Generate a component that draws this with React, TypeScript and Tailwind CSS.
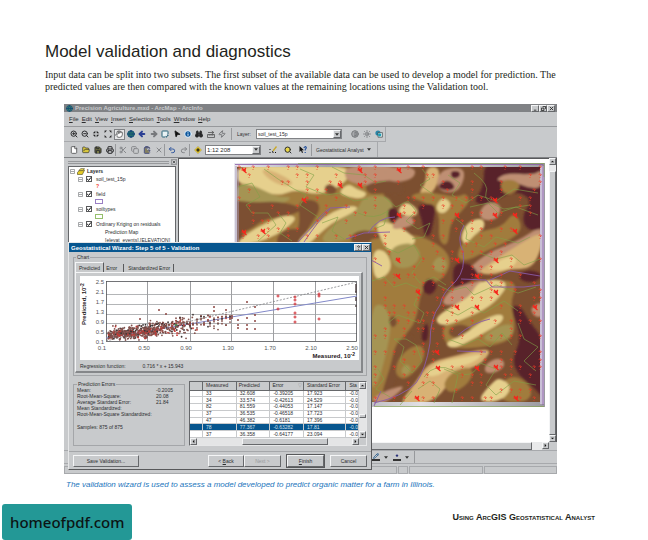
import React from "react";
import {
  ZoomIn, ZoomOut, Hand, Globe, ArrowLeft, ArrowRight, Info, Binoculars, Zap,
  File, FolderOpen, Save, Printer, Scissors, Copy, ClipboardPaste, X, Undo2, Redo2,
  Contrast, Sun, MousePointer2, SquareMousePointer, Pencil, Search, Pin,
} from "lucide-react";

type Pt = [number, number];

const raised = "border border-t-[#f4f5f6] border-l-[#f4f5f6] border-r-[#66686b] border-b-[#66686b] bg-[#c8cacc]";

/* ---------- deterministic random numbers ---------- */
function makeRandom(seed: number) {
  let s = seed;
  return () => {
    s = (s * 16807) % 2147483647;
    return s / 2147483647;
  };
}

/* Closed curve through the midpoints of the given corners. */
function smooth(points: Pt[]) {
  const mid = (a: Pt, b: Pt) => `${(a[0] + b[0]) / 2} ${(a[1] + b[1]) / 2}`;
  const last = points[points.length - 1];
  let d = `M${mid(last, points[0])}`;
  points.forEach((p, i) => {
    d += `Q${p[0]} ${p[1]} ${mid(p, points[(i + 1) % points.length])}`;
  });
  return d + "Z";
}

const OCHRE = "#a17b3d";
const OLIVE = "#a59453";
const CREAM = "#e6d08d";
const TAN = "#d8b274";
const PINK = "#bf8f73";
const BROWN = "#7c4f30";
const MAROON = "#59242b";

const regions: [string, Pt[]][] = [
  [OCHRE, [[0, 0], [125, 0], [150, 30], [165, 60], [150, 90], [0, 90]]],
  [CREAM, [[2, 2], [55, 3], [114, 3], [116, 14], [102, 26], [82, 32], [62, 26], [42, 34], [18, 22], [2, 20]]],
  [OLIVE, [[2, 20], [20, 22], [42, 34], [60, 34], [46, 42], [20, 38], [2, 42]]],
  [TAN, [[26, 6], [40, 8], [62, 20], [50, 24], [34, 16]]],
  [BROWN, [[-8, 36], [20, 40], [40, 38], [62, 42], [68, 48], [50, 54], [30, 56], [18, 66], [-8, 76]]],
  [BROWN, [[64, 42], [70, 36], [84, 38], [86, 48], [76, 62], [68, 78], [60, 80], [66, 60]]],
  [CREAM, [[2, 80], [14, 70], [28, 62], [50, 52], [64, 54], [52, 66], [34, 76], [12, 82]]],
  [BROWN, [[44, 70], [62, 64], [70, 72], [62, 84], [42, 84]]],
  [CREAM, [[60, 82], [82, 60], [100, 48], [118, 42], [126, 46], [110, 54], [98, 60], [84, 72], [74, 82]]],
  [OLIVE, [[84, 80], [98, 62], [125, 46], [128, 34], [150, 32], [160, 40], [158, 60], [135, 68], [112, 78]]],
  [CREAM, [[104, 30], [114, 20], [122, 26], [134, 30], [128, 36], [114, 34]]],
  [PINK, [[112, 2], [165, 2], [165, 18], [140, 22], [125, 22], [110, 16]]],
  [BROWN, [[130, 20], [170, 16], [170, 32], [150, 30], [134, 32]]],
  [BROWN, [[90, 24], [96, 20], [104, 26], [100, 32], [92, 30]]],
  [BROWN, [[116, 72], [130, 66], [150, 72], [140, 82], [118, 82]]],
  [OCHRE, [[128, 78], [150, 74], [180, 70], [210, 84], [218, 100], [208, 118], [188, 122], [182, 160], [170, 172], [160, 202], [150, 234], [128, 242]]],
  [CREAM, [[140, 58], [158, 60], [176, 70], [184, 80], [160, 90], [150, 84]]],
  [CREAM, [[138, 88], [150, 86], [158, 100], [154, 112], [140, 118]]],
  [OLIVE, [[154, 86], [176, 78], [188, 90], [180, 104], [160, 106]]],
  [OLIVE, [[136, 144], [150, 140], [158, 160], [152, 192], [144, 220], [136, 228]]],
  [OLIVE, [[198, 100], [206, 92], [214, 100], [210, 110], [200, 108]]],
  [PINK, [[151, 4], [182, 4], [180, 16], [160, 20], [151, 14]]],
  [TAN, [[192, 4], [206, 4], [204, 22], [194, 34], [184, 30], [192, 20]]],
  [PINK, [[206, 8], [222, 4], [232, 8], [226, 28], [210, 30], [202, 22]]],
  [MAROON, [[216, 8], [226, 8], [226, 14], [218, 16]]],
  [MAROON, [[204, 22], [214, 16], [222, 24], [216, 28], [206, 26]]],
  [OCHRE, [[174, 34], [188, 28], [212, 32], [224, 34], [232, 30], [236, 38], [228, 48], [216, 60], [214, 84], [204, 78], [206, 48], [188, 38]]],
  [MAROON, [[182, 42], [202, 40], [200, 56], [196, 74], [190, 72], [188, 56]]],
  [MAROON, [[154, 46], [161, 44], [166, 54], [160, 62], [154, 56]]],
  [CREAM, [[164, 46], [172, 38], [184, 46], [182, 54], [166, 52]]],
  [PINK, [[164, 54], [176, 52], [182, 60], [170, 66], [156, 66]]],
  [CREAM, [[202, 42], [209, 34], [218, 40], [212, 50], [204, 50]]],
  [MAROON, [[250, -4], [320, -8], [314, 66], [292, 68], [288, 52], [298, 38], [285, 28], [266, 34], [256, 42], [238, 40], [250, 24]]],
  [PINK, [[260, 18], [272, 10], [300, 12], [308, 6], [308, 26], [292, 24], [278, 18]]],
  [OCHRE, [[266, 18], [278, 16], [288, 22], [278, 32], [268, 30]]],
  [PINK, [[244, 50], [254, 38], [268, 42], [264, 56], [250, 58]]],
  [OCHRE, [[222, 96], [228, 78], [246, 68], [268, 64], [280, 48], [290, 66], [272, 80], [252, 88], [234, 98]]],
  [CREAM, [[226, 76], [232, 60], [248, 54], [252, 64], [240, 72], [232, 82]]],
  [PINK, [[228, 112], [252, 90], [284, 78], [308, 62], [310, 80], [298, 92], [262, 106], [240, 112]]],
  [TAN, [[242, 110], [262, 96], [284, 82], [308, 68], [308, 84], [298, 106], [276, 106], [260, 112]]],
  [CREAM, [[250, 106], [268, 96], [280, 92], [284, 100], [270, 108]]],
  [MAROON, [[219, 100], [236, 100], [246, 112], [238, 116], [224, 128], [219, 124]]],
  [MAROON, [[188, 122], [196, 114], [204, 122], [198, 132], [190, 130]]],
  [MAROON, [[284, 112], [296, 106], [310, 112], [300, 120], [288, 118]]],
  [PINK, [[206, 142], [216, 126], [236, 120], [252, 116], [240, 132], [224, 142]]],
  [OCHRE, [[208, 160], [250, 136], [264, 116], [284, 120], [276, 140], [282, 164], [276, 178], [252, 184], [222, 186], [210, 180]]],
  [CREAM, [[200, 156], [216, 144], [236, 134], [244, 118], [268, 116], [274, 124], [256, 144], [230, 156], [208, 164]]],
  [BROWN, [[214, 166], [226, 160], [240, 166], [230, 176], [216, 174]]],
  [CREAM, [[210, 180], [230, 172], [250, 156], [268, 150], [270, 158], [250, 170], [232, 180], [218, 186]]],
  [OLIVE, [[246, 176], [262, 164], [278, 160], [280, 172], [264, 180]]],
  [MAROON, [[276, 144], [286, 142], [296, 160], [310, 176], [312, 240], [302, 226], [284, 212], [278, 196], [288, 174]]],
  [PINK, [[296, 144], [310, 138], [310, 154], [300, 154]]],
  [MAROON, [[186, 176], [192, 158], [195, 166], [193, 180]]],
  [BROWN, [[154, 156], [160, 152], [164, 160], [158, 166]]],
  [BROWN, [[162, 178], [178, 170], [180, 180], [164, 200], [160, 226], [146, 234], [156, 206]]],
  [OCHRE, [[160, 210], [166, 192], [184, 180], [192, 188], [186, 204], [170, 218]]],
  [OLIVE, [[166, 208], [172, 200], [178, 206], [172, 214]]],
  [PINK, [[136, 236], [156, 226], [172, 222], [160, 234], [146, 242]]],
  [TAN, [[164, 242], [180, 222], [194, 200], [216, 194], [248, 186], [258, 188], [244, 204], [220, 208], [208, 232], [188, 242]]],
  [CREAM, [[190, 212], [206, 198], [232, 194], [250, 190], [240, 200], [214, 206], [202, 214]]],
  [OCHRE, [[208, 220], [222, 206], [240, 204], [236, 220], [216, 232]]],
  [PINK, [[252, 200], [266, 194], [272, 202], [262, 210], [250, 210]]],
  [OCHRE, [[268, 218], [282, 212], [298, 224], [296, 238], [272, 240], [262, 230]]],
  [CREAM, [[244, 236], [258, 220], [266, 214], [278, 224], [270, 236], [254, 240]]],
];

const streams = [
  "M64 79L78 64Q88 50 96 45L116 44M70 79Q84 58 96 46",
  "M112 76L130 70L156 69M134 70Q144 54 161 54",
  "M137 97L148 103M230 62Q222 76 229 88Q232 106 222 118Q208 130 206 142Q196 154 196 180Q192 206 182 220Q168 234 140 240",
  "M227 116L252 117L258 124L290 124L306 122M256 117L276 108L306 113",
  "M224 172Q238 160 256 156M223 188L252 189M147 228L140 243",
];

const contours = [
  "M4 24L18 20L26 34L12 42L18 50L34 50L42 62L24 78M30 6L44 16L60 26L72 32L66 42L84 54L76 66",
  "M66 6L80 12L72 24L92 32L106 30L120 38L134 36M98 4L110 10L130 12L142 20L152 18",
  "M88 60L104 54L98 68L110 76M124 50Q140 58 154 48L150 62L140 66M44 50L52 60L46 70L58 78",
  "M150 34L162 44L174 38L182 48L172 58L184 66L196 60L190 74L178 76M188 6L196 16L186 22L200 32",
  "M214 12L226 20L218 32L232 40L244 32L262 38L280 26L304 30M240 10Q256 22 252 30T270 46L296 42",
  "M236 44L254 40L264 50L282 44L304 52M222 56Q236 64 232 76L250 84L262 74L284 80L296 74",
  "M150 84L164 90L180 82L188 96L178 110L186 120L200 114L212 122M246 90L262 96L278 92L290 102L306 96",
  "M138 118L150 114L160 124L172 120L186 126L180 142L190 150L186 160L164 152L154 160",
  "M204 122L216 128L232 124L240 132L262 122L284 130L302 124M210 146L224 152L238 144L250 150L270 138L284 148",
  "M160 176L170 184L166 198L178 210L188 198L182 182L172 176ZM214 176L230 182L244 176L256 184L268 170L278 182",
  "M190 214Q202 198 220 208T246 200L262 206L252 222L262 232L280 218L302 222M284 160L290 176L304 184L290 198L302 208",
  "M210 206L224 212L218 240M184 226L196 218L206 226L200 240M144 206L150 216L142 226L156 234M166 242L178 228",
];

const clusters: Pt[] = [
  [10, 7], [126, 7], [106, 22], [126, 22], [70, 37], [10, 69], [29, 68], [165, 7], [261, 37], [261, 52], [281, 52],
  [165, 52], [223, 52], [281, 68], [223, 97], [262, 97], [164, 97], [164, 113], [243, 113], [184, 129], [262, 129],
  [223, 144], [243, 144], [301, 144], [203, 189], [204, 205], [243, 205], [262, 204], [183, 235], [282, 235],
];

const samples: Pt[] = (() => {
  const rnd = makeRandom(4217);
  const out: Pt[] = [];
  for (let r = 0; r < 31; r++)
    for (let c = 0; c < 32; c++) {
      const keep = rnd() < 0.42;
      const x = Math.round(5 + c * 9.7 + (rnd() < 0.2 ? 4 : 0));
      const y = Math.round(4 + r * 7.7);
      if (keep && x < 307 && y < 239) out.push([x, y]);
    }
  return out;
})();

function FieldMap() {
  return (
    <svg viewBox="0 0 311 244" className="block h-[244px] w-[311px] shrink-0" role="img" aria-label="Organic matter prediction map">
      <defs>
        <filter id="relief" x="0" y="0" width="1" height="1"><feGaussianBlur stdDeviation="1.3" /></filter>
        <linearGradient id="edge" x1="0" x2="1">
          <stop offset="0" stopColor="#e9e8ef" /><stop offset=".3" stopColor="#a3a3a8" />
          <stop offset=".6" stopColor="#e1e0e4" /><stop offset="1" stopColor="#9b9aa0" />
        </linearGradient>
      </defs>
      <rect width="311" height="244" fill="url(#edge)" />
      <svg x="3" y="4" width="303" height="235" viewBox="3 4 303 235">
        <rect width="311" height="244" fill={BROWN} />
        <g filter="url(#relief)">
          {regions.map(([fill, pts], i) => <path key={i} d={smooth(pts)} fill={fill} />)}
        </g>
      </svg>
      <path d="M308 3V241" stroke="#c9bfd6" strokeWidth="4" />
      <path d="M2 244V3M4 240V6" stroke="#a99bb5" strokeWidth="1" />
      <g fill="none" stroke="#7fa146" strokeWidth=".6">
        {contours.map((d, i) => <path key={i} d={d} />)}
        <path d="M64 .5H310V14M140 243.5H310" />
      </g>
      <g fill="none" stroke="#8a5ba6" strokeWidth=".9">
        {streams.map((d, i) => <path key={i} d={d} />)}
        <path d="M1 1.5H309V242" strokeWidth=".8" />
      </g>
      <g stroke="#ee3a26" strokeWidth=".8" fill="none">
        {samples.map(([x, y], i) => <path key={i} d={`M${x - 1.3} ${y - 0.5}q1.3-1.3 2.6 0q0 1-1.3 1.3M${x} ${y + 2}v.8`} />)}
      </g>
      <g stroke="#f5261c" strokeWidth="1.1">
        {clusters.map(([x, y], i) => <path key={i} d={`M${x - 2} ${y - 2}l3.5 3.5M${x + 2} ${y - 2}l-3 3M${x - 2.5} ${y}h4.5M${x} ${y + 1}l2.5 2`} />)}
      </g>
    </svg>
  );
}

/* ---------- scatter chart ---------- */
const scatter: Pt[] = (() => {
  const rnd = makeRandom(977);
  const bell = () => rnd() + rnd() + rnd() - 1.5;
  const out: Pt[] = [];
  for (let i = 0; i < 600; i++) {
    const x = 28 + Math.pow(rnd(), 0.9) * 78 * (0.45 + rnd() * 0.75);
    const y = 60 - (x - 26) * 0.13 + bell() * (4 + (x - 26) * 0.06) - (rnd() < 0.05 ? 9 * rnd() : 0);
    out.push([x, Math.min(y, 64)]);
  }
  [92, 96, 100, 104, 107, 110, 113, 117, 121, 124, 128, 130, 134, 138, 142, 146, 150].forEach((x) => {
    for (let k = 0; k < 6; k++) out.push([x, 49 - (x - 90) * 0.1 + bell() * 8]);
  });
  return out;
})();

const outliers: Pt[] = [
  [134, 31], [134, 35], [146, 34], [167, 26], [175, 31], [152, 40], [152, 42], [158, 44], [158, 49], [158, 52],
  [167, 42], [167, 49], [167, 53], [175, 39], [175, 45], [175, 53], [79, 34], [60, 43], [86, 38],
];
const redPoints: Pt[] = [[198, 20], [198, 33], [215, 21], [215, 24], [215, 28], [215, 37], [215, 41], [215, 46], [239, 18], [239, 20], [239, 43]];
const edgePoints: Pt[] = [[276, 9], [276, 11], [276, 13], [276, 15], [276, 16], [276, 22], [276, 24], [276, 30]];

function Chart() {
  return (
    <svg viewBox="0 0 279 84" className="block h-[84px] w-full bg-white font-['Liberation_Sans',sans-serif]" role="img" aria-label="Predicted against measured values">
      <g stroke="#85878a" strokeWidth=".8" fill="none">
        <path d="M67.5 5V65M110.5 5V65M151.5 5V65M193.5 5V65M235.5 5V65" />
        <path d="M26 18.5H277M26 28.5H277M26 38.5H277M26 47.5H277M26 57.5H277" stroke="#a0a2a5" />
        <rect x="26.5" y="5.5" width="250" height="60" stroke="#505255" />
      </g>
      <path d="M26 65L277 6" stroke="#808285" strokeWidth=".8" strokeDasharray="2 1.5" />
      <path d="M26 62L277 20" stroke="#8289c9" strokeWidth="1" />
      {scatter.map(([x, y], i) => <circle key={i} cx={x} cy={y} r=".9" fill={i % 6 === 0 ? "#c43a35" : i % 4 === 0 ? "#3f3636" : "#83514c"} />)}
      {outliers.map(([x, y], i) => <circle key={i} cx={x} cy={y} r="1" fill="#8d4540" />)}
      {edgePoints.map(([x, y], i) => <circle key={i} cx={x} cy={y} r="1" fill="#55484a" />)}
      {redPoints.map(([x, y], i) => <path key={i} d={`M${x - 1.5} ${y}h3M${x} ${y - 1.5}v3`} stroke="#d13338" strokeWidth="1" />)}
      <circle cx="96" cy="49" r="1" fill="#3b9a58" />
      <g fontSize="6" fill="#55575a" textAnchor="end">
        {["2.5", "2.1", "1.7", "1.3", "0.9", "0.5", "0.1"].map((t, i) => <text key={i} x="24" y={8 + i * 10}>{t}</text>)}
      </g>
      <g fontSize="6" fill="#55575a" textAnchor="middle">
        <text x="22" y="74">0.1</text><text x="64" y="74">0.50</text><text x="106" y="74">0.90</text>
        <text x="148" y="74">1.30</text><text x="190" y="74">1.70</text><text x="231" y="74">2.10</text><text x="272" y="74">2.50</text>
      </g>
      <g fontSize="6" fontWeight="bold" fill="#1f2022">
        <text x="275" y="82" textAnchor="end">Measured, 10<tspan dy="-2" fontSize="5">-2</tspan></text>
        <text transform="rotate(-90 6 49)" x="6" y="49">Predicted, 10<tspan dy="-2" fontSize="5">-2</tspan></text>
      </g>
    </svg>
  );
}

/* ---------- small controls ---------- */
type ToolProps = { label: string; children: React.ReactNode; active?: boolean };
function Tool({ label, children, active }: ToolProps) {
  return (
    <button aria-label={label} className={active ? "flex h-[11px] w-[11px] items-center justify-center border border-[#808285] bg-[#e6e7e8]" : "flex h-[11px] w-[11px] items-center justify-center"}>
      {children}
    </button>
  );
}

const Sep = () => <span className="h-[12px] w-px shrink-0 bg-[#97999c]" />;
const Down = () => <svg viewBox="0 0 5 3" className="h-[3px] w-[4px] shrink-0"><path d="M0 0H5L2.5 3Z" fill="#333" /></svg>;

function Dropdown({ label, value, wide }: { label: string; value: string; wide?: boolean }) {
  return (
    <span className={`${wide ? "w-[86px] text-[5px]" : "w-[56px] text-[6px]"} flex h-[10px] shrink-0 border border-[#808285] bg-white`}>
      <select aria-label={label} className="min-w-0 flex-1 appearance-none bg-white pl-px leading-[8px] outline-none">
        <option>{value}</option>
      </select>
      <span className={`${raised} flex w-[8px] items-center justify-center`}><Down /></span>
    </span>
  );
}

function Push({ children, className, disabled }: { children: React.ReactNode; className: string; disabled?: boolean }) {
  return (
    <button disabled={disabled} className={`${raised} ${className} h-[12px] text-center leading-[9px] disabled:text-[#97999c]`}>{children}</button>
  );
}

function CornerButton({ label, children }: { label: string; children: React.ReactNode }) {
  return (
    <button aria-label={label} className={`${raised} flex h-[7px] w-[8px] items-center justify-center`}>
      <svg viewBox="0 0 6 6" className="h-[5px] w-[5px]" fill="none" stroke="#222" strokeWidth="1">{children}</svg>
    </button>
  );
}

function ScrollArrow({ dir }: { dir: "up" | "down" | "left" | "right" }) {
  const d = { up: "M1 4H5L3 2Z", down: "M1 2H5L3 4Z", left: "M4 1V5L2 3Z", right: "M2 1V5L4 3Z" }[dir];
  return (
    <button aria-label={`Scroll ${dir}`} className={`${raised} flex h-[7px] w-[7px] shrink-0 items-center justify-center`}>
      <svg viewBox="0 0 6 6" className="h-[5px] w-[5px] shrink-0"><path d={d} fill="#111" /></svg>
    </button>
  );
}

function LayerRow({ name }: { name: string }) {
  return (
    <label className="flex h-[8px] items-center gap-[3px] whitespace-nowrap pl-[9px]">
      <svg viewBox="0 0 5 5" className="h-[5px] w-[5px] shrink-0"><path d="M.5 .5h4v4h-4zM1 2.5h3" fill="none" stroke="#808285" strokeWidth=".7" /></svg>
      <span className="relative h-[6px] w-[6px] shrink-0">
        <input type="checkbox" defaultChecked className="block h-[6px] w-[6px] appearance-none border border-[#58595b] bg-white" />
        <svg viewBox="0 0 6 6" className="pointer-events-none absolute inset-0 h-[6px] w-[6px]"><path d="M1.2 3L2.6 4.4L5 1.4" stroke="#000" fill="none" strokeWidth="1" /></svg>
      </span>
      <span className="pl-px">{name}</span>
    </label>
  );
}

const menus = ["File", "Edit", "View", "Insert", "Selection", "Tools", "Window", "Help"];
const ic = "h-[8px] w-[8px]";

/* Four small arrows pointing to the middle, or away from it. */
function FourArrows({ inward }: { inward?: boolean }) {
  return (
    <svg viewBox="0 0 8 8" className={ic} fill="#222">
      {inward
        ? <path d="M3.3 3.3H.8L3.3 .8ZM4.7 3.3V.8L7.2 3.3ZM3.3 4.7V7.2L.8 4.7ZM4.7 4.7H7.2L4.7 7.2Z" />
        : <path d="M.6 .6H3L.6 3ZM7.4 .6V3L5 .6ZM.6 7.4V5L3 7.4ZM7.4 7.4H5L7.4 5Z" />}
    </svg>
  );
}

function Toolbars() {
  return (
    <>
      <nav className="flex h-[15px] items-center gap-[3px] border-b border-[#97999c] pl-[5px] text-[6px]">
        {menus.map((m) => <button key={m}><u>{m[0]}</u>{m.slice(1)}</button>)}
      </nav>
      <div className="flex h-[15px] w-[322px] items-center border-r border-b border-[#a7a9ac] pl-[4px]">
        <div className="flex w-[160px] shrink-0 justify-between">
          <Tool label="Zoom in"><ZoomIn className={ic} strokeWidth={3} /></Tool>
          <Tool label="Zoom out"><ZoomOut className={ic} strokeWidth={3} /></Tool>
          <Tool label="Fixed zoom in"><FourArrows inward /></Tool>
          <Tool label="Fixed zoom out"><FourArrows /></Tool>
          <Tool label="Pan" active><Hand className={ic} fill="#fff" strokeWidth={2} /></Tool>
          <Tool label="Full extent"><Globe className={ic} fill="#2f8f5c" color="#15477c" strokeWidth={3} /></Tool>
          <Tool label="Back"><ArrowLeft className={ic} color="#2b3f94" strokeWidth={6} /></Tool>
          <Tool label="Forward"><ArrowRight className={ic} color="#77797c" strokeWidth={6} /></Tool>
          <Tool label="Select features"><SquareMousePointer className={ic} color="#286278" fill="#e8f2f4" strokeWidth={3} /></Tool>
          <Tool label="Select elements"><MousePointer2 className={`${ic} rotate-12`} fill="#111" color="#111" /></Tool>
          <Tool label="Identify"><Info className={ic} fill="#0a559c" color="#e8f2fa" strokeWidth={3} /></Tool>
          <Tool label="Find"><Binoculars className={ic} fill="#222" strokeWidth={3} /></Tool>
          <Tool label="Measure"><svg viewBox="0 0 8 8" className={ic}><path d="M.5 4.5h7v3h-7zM2.2 4.5v1.3M4 4.5v1.3M5.8 4.5v1.3M1 2.5h5.5M4.8 1l2 1.5l-2 1.3" fill="none" stroke="#444" strokeWidth=".7" /></svg></Tool>
          <Tool label="Hyperlink"><Zap className={ic} color="#77797c" strokeWidth={3} /></Tool>
        </div>
        <span className="flex items-center gap-[3px] pl-[3px]">
          <Sep /><span className="w-[18px] pl-[2px]">Layer:</span>
          <Dropdown label="Layer" value="soil_test_15p" wide />
        </span>
        <span className="flex gap-px pl-[7px]">
          <Tool label="Contrast"><Contrast className={ic} color="#77797c" fill="#a7a9ac" strokeWidth={3} /></Tool>
          <Tool label="Brightness"><Sun className={ic} color="#77797c" strokeWidth={3} /></Tool>
          <Tool label="Transparency"><svg viewBox="0 0 8 8" className={ic}><circle cx="3" cy="3" r="2.6" fill="#2b86a8" /><path d="M3 2.6h4.4v4.6H3z" fill="#d4ecf0" stroke="#333" strokeWidth=".6" /><circle cx="4.6" cy="4.8" r="1.6" fill="#1e9fb5" /></svg></Tool>
        </span>
      </div>
      <div className="flex h-[15px] w-[314px] items-center border-r border-[#a7a9ac] pl-[4px]">
        <span className="flex gap-px">
          <Tool label="New"><File className={ic} fill="#fff" strokeWidth={2} /></Tool>
          <Tool label="Open"><FolderOpen className={ic} fill="#d8c63d" strokeWidth={2} /></Tool>
          <Tool label="Save"><Save className={ic} fill="#777946" strokeWidth={3} /></Tool>
          <Tool label="Print"><Printer className={ic} strokeWidth={3} /></Tool>
        </span>
        <Sep />
        <span className="flex gap-px pl-px text-[#85878a]">
          <Tool label="Cut"><Scissors className={ic} strokeWidth={3} /></Tool>
          <Tool label="Copy"><Copy className={ic} strokeWidth={3} /></Tool>
          <Tool label="Paste"><ClipboardPaste className={ic} color="#4d5583" fill="#85805f" strokeWidth={3} /></Tool>
          <Tool label="Delete"><X className={ic} strokeWidth={3} /></Tool>
        </span>
        <Sep />
        <span className="flex gap-px pl-px">
          <Tool label="Undo"><Undo2 className={ic} color="#345aa0" strokeWidth={3} /></Tool>
          <Tool label="Redo"><Redo2 className={ic} color="#85878a" strokeWidth={3} /></Tool>
        </span>
        <Sep />
        <span className="flex items-center gap-[2px] pl-[2px]">
          <Tool label="Add data"><svg viewBox="0 0 8 8" className={ic}><path d="M4 .5L7.5 4L4 7.5L.5 4Z" fill="#f3d32b" stroke="#8a7718" strokeWidth=".4" /><path d="M2.2 4h3.6M4 2.2v3.6" stroke="#111" strokeWidth="1.2" /></svg></Tool>
          <Dropdown label="Map scale" value="1:12 208" />
        </span>
        <span className="flex gap-[4px] pl-[6px]">
          <Tool label="Editor"><svg viewBox="0 0 8 8" className={ic}><path d="M7.5 .5L4 5" stroke="#c9a829" strokeWidth="1.3" /><path d="M1 3v1M1 6v1M3.5 6.5h1M6 6.5h1" stroke="#111" strokeWidth="1" /><path d="M4 5l-.8 1" stroke="#111" strokeWidth=".8" /></svg></Tool>
          <Tool label="Catalog"><Search className={ic} fill="#e8d548" strokeWidth={3} /></Tool>
          <Tool label="What is this"><svg viewBox="0 0 8 8" className={ic}><path d="M.5 0V6L2 4.6L3 7L4 6.5L3 4.2H5Z" fill="#111" /><path d="M4.8 2Q6.2-.4 7.3 1.5Q7.3 2.5 6.2 3.5V4.6M6.2 6v1" fill="none" stroke="#1c4b9a" strokeWidth="1.1" /></svg></Tool>
        </span>
        <span className="flex items-center gap-[4px] pl-[3px]"><Sep />
          <button className="flex items-center gap-[3px] whitespace-nowrap">Geostatistical Analyst <Down /></button>
        </span>
      </div>
    </>
  );
}

const rows = [
  ["33", "32.608", "-0.39205", "17.923", "-0.0"],
  ["34", "33.574", "-0.42613", "24.529", "-0.0"],
  ["82", "81.559", "-0.44053", "17.147", "-0.0"],
  ["37", "36.535", "-0.46518", "17.723", "-0.0"],
  ["47", "46.382", "-0.6181", "17.396", "-0.0"],
  ["78", "77.367", "-0.63282", "17.81", "-0.0"],
  ["37", "36.358", "-0.64177", "23.094", "-0.0"],
];
const stats = [["Mean:", "-0.2005"], ["Root-Mean-Square:", "20.08"], ["Average Standard Error:", "21.84"], ["Mean Standardized:", ""], ["Root-Mean-Square Standardized:", ""]];

function Wizard() {
  return (
    <section aria-label="Geostatistical Wizard" className="absolute top-[138px] left-[4px] w-[304px] border border-t-[#e6e7e8] border-l-[#e6e7e8] border-r-[#58595b] border-b-[#58595b] bg-[#c8cacc]">
      <header className="flex h-[9px] items-center bg-[#07568f] pl-[2px] pr-px text-[6px] font-bold text-white">
        <span className="flex-1">Geostatistical Wizard: Step 5 of 5 - Validation</span>
        <CornerButton label="Help"><path d="M1.5 2Q3 0 4.5 2L3 3.5M3 4.6v1" /></CornerButton>
        <CornerButton label="Close"><path d="M1 1L5 5M5 1L1 5" /></CornerButton>
      </header>
      <div className="px-[4px] pt-[2px]">
        <fieldset className="border border-[#a4a6a9] px-px pb-[2px]">
          <legend className="ml-px px-px leading-[6px]">Chart</legend>
          <div role="tablist" className="mt-[2px] flex h-[10px] items-end gap-px">
            <button role="tab" aria-selected="true" className="h-[10px] border-t border-l border-r border-t-[#f4f5f6] border-l-[#f4f5f6] border-r-[#58595b] px-[3px]">Predicted</button>
            <button role="tab" aria-selected="false" className="h-[8px] border-r border-[#58595b] pr-[6px] pl-px leading-[7px]">Error</button>
            <button role="tab" aria-selected="false" className="h-[8px] border-r border-[#58595b] px-[3px] leading-[7px]">Standardized Error</button>
          </div>
          <div className="mr-[2px] border border-t-[#f4f5f6] border-l-[#f4f5f6] border-r-2 border-b-2 border-r-[#85878a] border-b-[#85878a] pt-[3px] pr-[2px] pl-[4px]">
            <Chart />
            <p className="flex h-[11px] items-center gap-[17px]"><span>Regression function:</span><span>0.716 * x + 15.943</span></p>
          </div>
        </fieldset>
        <div className="flex items-stretch gap-[4px] pt-[5px]">
          <fieldset className="w-[112px] border border-[#a4a6a9] px-[3px]">
            <legend className="px-px leading-[6px]">Prediction Errors</legend>
            <dl>
              {stats.map(([k, v]) => <div key={k} className="flex h-[6px] whitespace-nowrap leading-[6px]"><dt className="w-[79px]">{k}</dt><dd>{v}</dd></div>)}
            </dl>
            <p className="pt-[7px] leading-[6px]">Samples: 875 of 875</p>
          </fieldset>
          <div className="min-w-0 flex-1 border border-t-[#66686b] border-l-[#66686b] border-r-[#e6e7e8] border-b-[#e6e7e8]">
            <div className="flex">
              <table className="h-[56px] min-w-0 flex-1 table-fixed border-collapse bg-white text-left leading-[5px]">
                <thead>
                  <tr className="h-[8px] bg-[#c8cacc]">
                    <th className="w-[13px] border-r border-b border-[#66686b]" />
                    <th className="w-[34px] border-r border-b border-[#66686b] pl-[3px] font-normal">Measured</th>
                    <th className="w-[34px] border-r border-b border-[#66686b] pl-[2px] font-normal">Predicted</th>
                    <th className="w-[34px] border-r border-b border-[#66686b] pl-[2px] font-normal"><span className="flex justify-between pr-px">Error <span aria-hidden="true" className="text-[#97999c]">▽</span></span></th>
                    <th className="w-[43px] border-r border-b border-[#66686b] pl-[3px] font-normal">Standard Error</th>
                    <th className="overflow-hidden border-b border-[#66686b] pl-[3px] font-normal whitespace-nowrap">Sta</th>
                  </tr>
                </thead>
                <tbody>
                  {rows.map((r, i) => (
                    <tr key={i} className={i === 5 ? "bg-[#07568f] text-[#d3e2ee]" : ""}>
                      <td className="border-r border-b border-[#c8cacc]" />
                      {r.map((c, j) => <td key={j} className="overflow-hidden border-r border-b border-[#c8cacc] pl-[3px] whitespace-nowrap">{c}</td>)}
                    </tr>
                  ))}
                </tbody>
              </table>
              <div className="flex w-[7px] flex-col justify-between bg-[#e4e5e6]">
                <ScrollArrow dir="up" />
                <span className={`${raised} mt-[12px] h-[4px]`} />
                <ScrollArrow dir="down" />
              </div>
            </div>
            <div className="mr-[7px] flex bg-[#e4e5e6]">
              <ScrollArrow dir="left" />
              <div className="flex flex-1 justify-center pl-[20px]"><span className={`${raised} h-[7px] w-[86px]`} /></div>
              <ScrollArrow dir="right" />
            </div>
          </div>
        </div>
      </div>
      <footer className="mt-[5px] flex border-t border-[#a4a6a9] px-[4px] pt-[3px] pb-[2px]">
        <Push className="w-[66px]">Save Validation...</Push>
        <span className="flex-1" />
        <Push className="w-[36px]">&lt; <u>B</u>ack</Push>
        <Push className="mr-[6px] w-[37px]" disabled>Next &gt;</Push>
        <Push className="mr-[6px] w-[37px] outline outline-[#58595b]"><u>F</u>inish</Push>
        <Push className="w-[37px]">Cancel</Push>
      </footer>
    </section>
  );
}

function ArcMap() {
  return (
    <div className="relative mr-[91px] ml-[64px] bg-[#c8cacc] font-['Liberation_Sans',Arial,sans-serif] text-[5px] leading-[8px] text-[#2c2d2f]">
      <header className="flex h-[8px] items-center bg-[#808285] px-[2px] text-[6px] font-bold text-[#c8cacc]">
        <Globe className="mr-[2px] h-[7px] w-[7px]" fill="#3c9470" color="#174976" strokeWidth={3} />
        <span className="flex-1">Precision Agriculture.mxd - ArcMap - ArcInfo</span>
        <CornerButton label="Minimize"><path d="M1 5h3" /></CornerButton>
        <CornerButton label="Restore"><path d="M2 .5h3.5v3M.5 2.5h3v3h-3z" /></CornerButton>
        <CornerButton label="Close"><path d="M1 1L5 5M5 1L1 5" /></CornerButton>
      </header>
      <Toolbars />
      <div className="flex border-t border-[#808285]">
        <aside className="w-[114px] shrink-0 pl-[4px]">
          <div className="flex h-[8px] items-center gap-[2px] pr-px">
            <span className="h-[3px] flex-1 border-y border-[#97999c]" />
            <button aria-label="Close layer list" className="h-[6px] w-[6px] border border-[#97999c]"><X className="h-[4px] w-[4px]" strokeWidth={4} /></button>
          </div>
          <div className="mr-[2px] h-[276px] overflow-hidden border border-[#66686b] bg-white">
            <p className="flex h-[8px] items-center gap-[2px] pl-px font-bold">
              <svg viewBox="0 0 5 5" className="h-[5px] w-[5px]"><path d="M.5 .5h4v4h-4zM1 2.5h3" fill="none" stroke="#808285" strokeWidth=".7" /></svg>
              <svg viewBox="0 0 9 8" className="h-[7px] w-[8px]"><path d="M.5 5L3 2.5H8.5L6 7.5H.5Z" fill="#e4cc29" stroke="#464018" strokeWidth=".7" /><path d="M2 3L4 .8H8.5L6.5 3Z" fill="#f0de56" stroke="#464018" strokeWidth=".7" /></svg>
              Layers
            </p>
            <LayerRow name="soil_test_15p" />
            <p className="h-[7px] pl-[27px] font-bold leading-[7px] text-[#f03322]">?</p>
            <LayerRow name="field" />
            <div className="h-[7px] pt-px pl-[26px]"><span className="block h-[5px] w-[8px] border border-[#9a7fc4]" /></div>
            <LayerRow name="soiltypes" />
            <div className="h-[7px] pt-px pl-[26px]"><span className="block h-[5px] w-[8px] border border-[#95bf6c]" /></div>
            <LayerRow name="Ordinary Kriging on residuals" />
            <p className="pl-[36px] whitespace-nowrap">Prediction Map</p>
            <p className="pl-[36px] whitespace-nowrap">[elevat_events].[ELEVATION]</p>
          </div>
        </aside>
        <div className="flex min-w-0 flex-1 flex-col">
          <div className="flex">
            <div className="flex min-w-0 flex-1 justify-end border-t border-l border-[#58595b] bg-white pt-[4px] pr-[4px]"><FieldMap /></div>
            <div className="flex h-[284px] w-[8px] flex-col items-center border-r border-[#58595b]">
              <ScrollArrow dir="up" />
              <span className="h-[6px] w-full bg-[#e9eaeb]" />
              <span className={`${raised} w-full flex-1`} />
              <ScrollArrow dir="down" />
            </div>
          </div>
          <div className="mr-[8px] flex h-[8px]">
            <span className={`${raised} flex-1`} />
            <span className="w-[10px] bg-[#e9eaeb]" />
            <ScrollArrow dir="right" />
          </div>
        </div>
      </div>
      <div className="flex h-[14px] items-center gap-[5px] border-t border-b border-[#a7a9ac] pl-[308px]">
        <button aria-label="Line color" className="flex items-center gap-[4px]"><Pencil className="h-[8px] w-[8px] border-b-2 border-[#333]" color="#1c568a" strokeWidth={3} /><Down /></button>
        <button aria-label="Marker color" className="flex items-center gap-[4px]"><svg viewBox="0 0 8 8" className="h-[8px] w-[8px]"><circle cx="4" cy="2.6" r="1.2" fill="#27307a" /><path d="M0 7h8" stroke="#333" strokeWidth="2" /></svg><Down /></button>
        <Sep />
      </div>
      <div className="flex h-[10px] items-end gap-px pt-[2px]">
        <span className="h-[8px] flex-1 border border-[#a7a9ac]" />
        <span className="h-[8px] w-[10px] border border-[#a7a9ac]" />
        <span className="h-[8px] w-[74px] border border-[#a7a9ac]" />
        <span className="h-[8px] w-[73px] border border-[#a7a9ac]" />
      </div>
      <Wizard />
    </div>
  );
}

export default function App() {
  return (
    <main className="bg-white pt-[42px] font-['Liberation_Sans',Arial,sans-serif]">
      <div className="pr-[70px] pl-[45px]">
        <h1 className="text-[17px] leading-[20px] text-[#231f20]">Model validation and diagnostics</h1>
        <p className="mt-[7px] mb-[11px] font-['Liberation_Serif',serif] text-[10px] leading-[12px] text-[#231f20]">
          Input data can be split into two subsets. The first subset of the available data can be used to develop a model for prediction. The predicted values are then compared with the known values at the remaining locations using the Validation tool.
        </p>
      </div>
      <ArcMap />
      <p className="mt-[6px] pl-[66px] text-[8px] leading-[10px] text-[#1b75bc] italic">The validation wizard is used to assess a model developed to predict organic matter for a farm in Illinois.</p>
      <footer className="mt-[14px] flex items-start justify-between pr-[53px] pl-[2px]">
        <a href="#home" className="h-[36px] rounded-[3px] bg-[#239896] px-[8px] font-['Noto_Sans',sans-serif] text-[15px] leading-[36px] font-medium text-[#0c1414]">homeofpdf.com</a>
        <p className="pt-[7px] text-[9px] leading-[12px] font-bold text-[#231f20] [font-variant:small-caps]">Using ArcGIS Geostatistical Analyst</p>
      </footer>
    </main>
  );
}
